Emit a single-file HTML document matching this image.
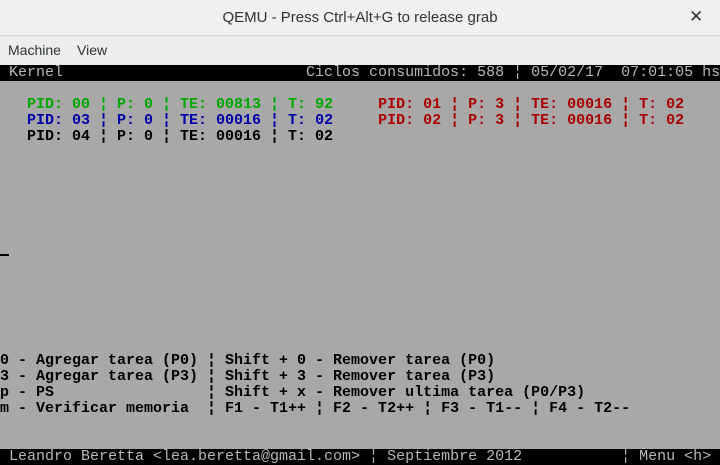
<!DOCTYPE html>
<html><head><meta charset="utf-8"><style>
html,body{margin:0;padding:0;width:720px;height:465px;overflow:hidden;background:#fff;}
#title{position:absolute;left:0;top:0;width:720px;height:35px;background:#f0f0f0;border-bottom:1px solid #d0d0d0;font-family:"Liberation Sans","DejaVu Sans",sans-serif;font-size:15px;color:#2e3436;}
#title .t{position:absolute;left:0;right:0;top:9px;text-align:center;}
#title .x{position:absolute;left:689px;top:7px;font-size:17px;font-weight:bold;color:#2e3436;}
#menu{position:absolute;left:0;top:36px;width:720px;height:29px;background:#ededed;font-family:"Liberation Sans","DejaVu Sans",sans-serif;font-size:14px;color:#2e3436;}
#menu span{position:absolute;top:6px;}
#screen{position:absolute;left:0;top:65px;width:720px;height:400px;background:#a8a8a8;}
pre{margin:0;font-family:"Liberation Mono","DejaVu Sans Mono",monospace;font-size:15px;line-height:16px;font-weight:bold;white-space:pre;}
.row{position:absolute;left:0;height:16px;width:720px;}
.blk{background:#000;color:#b8b8b8;font-weight:normal;}
.g{color:#00a800}.b{color:#0000a8}.r{color:#a80000}.k{color:#000}
#cur{position:absolute;left:0;top:254px;width:9px;height:2px;background:#000;}
</style></head><body>
<div id="title"><div class="t">QEMU - Press Ctrl+Alt+G to release grab</div><div class="x">✕</div></div>
<div id="menu"><span style="left:8px">Machine</span><span style="left:77px">View</span></div>
<div id="screen">
<pre class="row blk" style="top:0"> Kernel                           Ciclos consumidos: 588 ¦ 05/02/17  07:01:05 hs </pre>
<pre class="row" style="top:32px">   <span class="g">PID: 00 ¦ P: 0 ¦ TE: 00813 ¦ T: 92</span>     <span class="r">PID: 01 ¦ P: 3 ¦ TE: 00016 ¦ T: 02</span></pre>
<pre class="row" style="top:48px">   <span class="b">PID: 03 ¦ P: 0 ¦ TE: 00016 ¦ T: 02</span>     <span class="r">PID: 02 ¦ P: 3 ¦ TE: 00016 ¦ T: 02</span></pre>
<pre class="row k" style="top:64px">   PID: 04 ¦ P: 0 ¦ TE: 00016 ¦ T: 02</pre>
<div id="cur" style="top:189px"></div>
<pre class="row k" style="top:288px">0 - Agregar tarea (P0) ¦ Shift + 0 - Remover tarea (P0)</pre>
<pre class="row k" style="top:304px">3 - Agregar tarea (P3) ¦ Shift + 3 - Remover tarea (P3)</pre>
<pre class="row k" style="top:320px">p - PS                 ¦ Shift + x - Remover ultima tarea (P0/P3)</pre>
<pre class="row k" style="top:336px">m - Verificar memoria  ¦ F1 - T1++ ¦ F2 - T2++ ¦ F3 - T1-- ¦ F4 - T2--</pre>
<pre class="row blk" style="top:384px"> Leandro Beretta &lt;lea.beretta@gmail.com&gt; ¦ Septiembre 2012           ¦ Menu &lt;h&gt; </pre>
</div>
</body></html>
